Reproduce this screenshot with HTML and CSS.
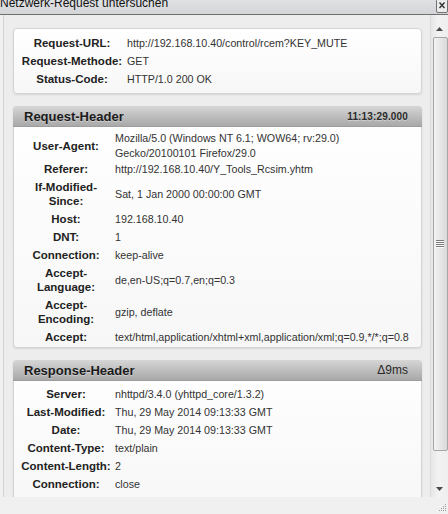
FILE: index.html
```html
<!DOCTYPE html>
<html lang="de">
<head>
<meta charset="utf-8">
<title>Netzwerk-Request untersuchen</title>
<link rel="stylesheet" href="styles.css">
</head>
<body>
<div class="window">
  <div class="titlebar">
    <span class="title">Netzwerk-Request untersuchen</span>
    <span class="close">
      <svg width="12" height="13" viewBox="0 0 12 13"><rect x="0.5" y="-1" width="11" height="13.5" rx="1.5" fill="#ececec" stroke="#707070"/><path d="M3.5 2.5 L8.5 8 M8.5 2.5 L3.5 8" stroke="#333" stroke-width="1.4"/></svg>
    </span>
  </div>
  <div class="main">
    <div class="viewport">
      <section class="card summary">
        <div class="grid grid-wide">
          <div class="label">Request-URL:</div><div class="value">http://192.168.10.40/control/rcem?KEY_MUTE</div>
          <div class="label">Request-Methode:</div><div class="value">GET</div>
          <div class="label">Status-Code:</div><div class="value">HTTP/1.0 200 OK</div>
        </div>
      </section>
      <section class="card">
        <header class="card-head"><h2>Request-Header</h2><span class="stamp">11:13:29.000</span></header>
        <div class="grid">
          <div class="label">User-Agent:</div><div class="value">Mozilla/5.0 (Windows NT 6.1; WOW64; rv:29.0) Gecko/20100101 Firefox/29.0</div>
          <div class="label">Referer:</div><div class="value">http://192.168.10.40/Y_Tools_Rcsim.yhtm</div>
          <div class="label">If-Modified-Since:</div><div class="value">Sat, 1 Jan 2000 00:00:00 GMT</div>
          <div class="label">Host:</div><div class="value">192.168.10.40</div>
          <div class="label">DNT:</div><div class="value">1</div>
          <div class="label">Connection:</div><div class="value">keep-alive</div>
          <div class="label">Accept-Language:</div><div class="value">de,en-US;q=0.7,en;q=0.3</div>
          <div class="label">Accept-Encoding:</div><div class="value">gzip, deflate</div>
          <div class="label">Accept:</div><div class="value nowrap">text/html,application/xhtml+xml,application/xml;q=0.9,*/*;q=0.8</div>
        </div>
      </section>
      <section class="card card-last">
        <header class="card-head"><h2>Response-Header</h2><span class="delta">Δ9ms</span></header>
        <div class="grid">
          <div class="label">Server:</div><div class="value">nhttpd/3.4.0 (yhttpd_core/1.3.2)</div>
          <div class="label">Last-Modified:</div><div class="value">Thu, 29 May 2014 09:13:33 GMT</div>
          <div class="label">Date:</div><div class="value">Thu, 29 May 2014 09:13:33 GMT</div>
          <div class="label">Content-Type:</div><div class="value">text/plain</div>
          <div class="label">Content-Length:</div><div class="value">2</div>
          <div class="label">Connection:</div><div class="value">close</div>
        </div>
      </section>
    </div>
    <div class="scrollbar">
      <div class="sb-btn sb-up"><svg width="7" height="4" viewBox="0 0 7 4"><path d="M3.5 0 L7 4 L0 4 Z" fill="#4a4a4a"/></svg></div>
      <div class="thumb">
        <svg class="grip-lines" width="8" height="8" viewBox="0 0 8 8"><path d="M0 0.5H8M0 2.5H8M0 4.5H8M0 6.5H8" stroke="#7a7a7a" stroke-width="1"/><path d="M0 1.5H8M0 3.5H8M0 5.5H8M0 7.5H8" stroke="#fafafa" stroke-width="1"/></svg>
      </div>
      <div class="sb-track"></div>
      <div class="sb-btn sb-down"><svg width="7" height="4" viewBox="0 0 7 4"><path d="M0 0 L7 0 L3.5 4 Z" fill="#4a4a4a"/></svg></div>
    </div>
  </div>
  <div class="statusbar">
    <svg class="resize" width="10" height="10" viewBox="0 0 10 10">
      <g fill="#9a9a9a"><rect x="8" y="2" width="1" height="1"/><rect x="6" y="4" width="1" height="1"/><rect x="8" y="4" width="1" height="1"/><rect x="4" y="6" width="1" height="1"/><rect x="6" y="6" width="1" height="1"/><rect x="8" y="6" width="1" height="1"/><rect x="2" y="8" width="1" height="1"/><rect x="4" y="8" width="1" height="1"/><rect x="6" y="8" width="1" height="1"/><rect x="8" y="8" width="1" height="1"/></g>
    </svg>
  </div>
</div>
</body>
</html>
```

FILE: styles.css
```css
html, body {
  margin: 0;
  padding: 0;
}
body {
  width: 448px;
  height: 514px;
  overflow: hidden;
  background: #f0f0f0;
  font-family: "Liberation Sans", Arial, sans-serif;
  color: #222;
}
.window {
  display: flex;
  flex-direction: column;
  height: 514px;
}
.titlebar {
  flex: none;
  height: 14px;
  display: flex;
  justify-content: space-between;
  align-items: flex-start;
  overflow: hidden;
  background: linear-gradient(#dfe1e3, #d3d5d8);
  border-bottom: 1px solid #6f6f6f;
}
.title {
  font-size: 12px;
  line-height: 12px;
  margin-top: -3px;
  color: #111;
  white-space: nowrap;
}
.close {
  display: block;
  width: 12px;
  height: 13px;
}
.close svg { display: block; }
.main {
  flex: 1;
  min-height: 0;
  display: flex;
}
.viewport {
  flex: 1;
  min-width: 0;
  margin-left: 3px;
  border-left: 1px solid #d2d2d2;
  background: #ededed;
  overflow: hidden;
  padding: 13px 8px 0 9px;
  display: flex;
  flex-direction: column;
  gap: 12px;
}
.card {
  flex: none;
  background: linear-gradient(#ffffff, #f7f7f7);
  border: 1px solid #d4d4d4;
  border-radius: 4px;
  box-shadow: 0 1px 2px rgba(0, 0, 0, 0.10);
}
.summary {
  padding: 5px 0;
}
.card-head {
  height: 21px;
  margin: -1px -1px 0;
  padding: 0 14px 0 11px;
  display: flex;
  align-items: center;
  justify-content: space-between;
  background: linear-gradient(#d6d6d6, #bcbcbc 55%, #a9a9a9);
  border-radius: 4px 4px 0 0;
  border-bottom: 1px solid #9d9d9d;
  box-sizing: border-box;
}
.card-head h2 {
  margin: 0;
  font-size: 13px;
  font-weight: bold;
  color: #1b1b1b;
  text-shadow: 0 1px 0 rgba(255, 255, 255, 0.35);
}
.stamp {
  font-size: 10px;
  font-weight: bold;
  letter-spacing: 0.15px;
  color: #2a2a2a;
  text-shadow: 0 1px 0 rgba(255, 255, 255, 0.35);
}
.delta {
  font-size: 12px;
  color: #2a2a2a;
}
.grid {
  display: grid;
  grid-template-columns: 92px 1fr;
  column-gap: 3px;
  align-items: center;
  padding: 4px 6px 1px 6px;
}
.card-last .grid {
  padding-bottom: 8px;
}
.grid-wide {
  grid-template-columns: 104px 1fr;
  padding: 0 6px;
}
.label {
  font-size: 11.5px;
  font-weight: bold;
  line-height: 14px;
  padding: 2px 0;
  text-align: center;
  color: #222;
}
.value {
  font-size: 10.7px;
  line-height: 14.5px;
  color: #333;
}
.nowrap { white-space: nowrap; }
.scrollbar {
  flex: none;
  width: 17px;
  border-left: 1px solid #dcdcdc;
  background: linear-gradient(to right, #e6e6e6, #f2f2f2 40%, #eeeeee);
  display: flex;
  flex-direction: column;
  align-items: center;
}
.sb-btn {
  flex: none;
  width: 17px;
  display: flex;
  justify-content: center;
}
.sb-btn svg { display: block; }
.sb-up {
  height: 22px;
  align-items: flex-start;
  padding-top: 12px;
  box-sizing: border-box;
}
.thumb {
  flex: none;
  width: 13px;
  height: 412px;
  margin-left: 1px;
  border: 1px solid #a6a6a6;
  border-radius: 2px;
  background: linear-gradient(to right, #f4f4f4, #e8e8e8 45%, #d9d9d9);
  display: flex;
  align-items: center;
  justify-content: center;
}
.grip-lines { display: block; }
.sb-track { flex: 1; }
.sb-down {
  height: 17px;
  align-items: flex-start;
  padding-top: 7px;
  box-sizing: border-box;
}
.statusbar {
  flex: none;
  height: 17px;
  background: #f0f0f0;
  display: flex;
  justify-content: flex-end;
  align-items: flex-end;
  padding: 0 1px 2px 0;
  box-sizing: border-box;
}
.resize { display: block; }
```
